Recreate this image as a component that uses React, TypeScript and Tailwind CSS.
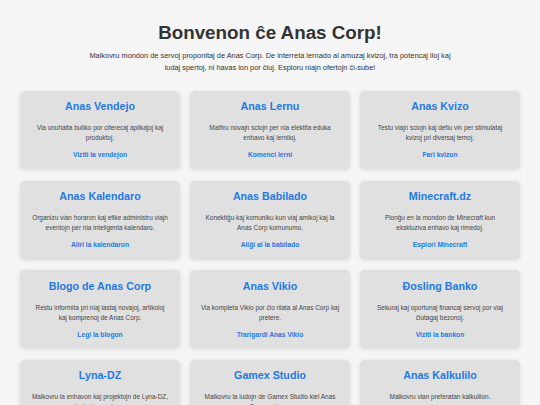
import React from "react";

type Card = { title: string; desc: string; link: string };

const cards: Card[] = [
  { title: "Anas Vendejo", desc: "Via unuhalta butiko por ciferecaj aplikaĵoj kaj produktoj.", link: "Viziti la vendejon" },
  { title: "Anas Lernu", desc: "Malfiru novajn sciojn per nia elektita eduka enhavo kaj lerniloj.", link: "Komenci lerni" },
  { title: "Anas Kvizo", desc: "Testu viajn sciojn kaj defiu vin per stimulataj kvizoj pri diversaj temoj.", link: "Fari kvizon" },
  { title: "Anas Kalendaro", desc: "Organizu vian horaron kaj efike administru viajn eventojn per nia inteligenta kalendaro.", link: "Aliri la kalendaron" },
  { title: "Anas Babilado", desc: "Konektiĝu kaj komuniku kun viaj amikoj kaj la Anas Corp komunumo.", link: "Aliĝi al la babilado" },
  { title: "Minecraft.dz", desc: "Plonĝu en la mondon de Minecraft kun ekskluziva enhavo kaj rimedoj.", link: "Esplori Minecraft" },
  { title: "Blogo de Anas Corp", desc: "Restu informita pri niaj lastaj novajoj, artikoloj kaj\u00A0komprenoj de Anas Corp.", link: "Legi la blogon" },
  { title: "Anas Vikio", desc: "Via kompleta Vikio por ĉio rilata al Anas Corp kaj pretere.", link: "Trarigardi Anas Vikio" },
  { title: "Đosling Banko", desc: "Sekuraj kaj oportunaj financaj servoj por viaj ĉiutagaj bezonoj.", link: "Viziti la bankon" },
  { title: "Lyna-DZ", desc: "Malkovru la enhavon kaj projektojn de Lyna-DZ, nia kreiva partnero.", link: "Viziti Lyna-DZ" },
  { title: "Gamex Studio", desc: "Malkovru la ludojn de Gamex Studio kiel Anas Corp partnero.", link: "Ludi nun" },
  { title: "Anas Kalkulilo", desc: "Malkovru vian preferatan kalkulilon.", link: "Uzi la kalkulilon" },
];

export default function App() {
  return (
    <div
      className="min-h-screen bg-[#f5f5f5] text-[#333]"
      style={{ fontFamily: '"Liberation Sans", Arial, sans-serif' }}
    >
      <header className="pt-[22px] text-center">
        <h1 className="text-[18.8px] leading-[22px] font-bold text-[#333]">Bonvenon ĉe Anas Corp!</h1>
        <p className="mx-auto mt-[6px] max-w-[372px] text-[7.4px] leading-[12.4px] text-[#333]">
          Malkovru mondon de servoj proponitaj de Anas Corp. De interreta lernado al amuzaj kvizoj, tra potencaj iloj kaj ludaj spertoj, ni havas ion por ĉiuj. Esploru niajn ofertojn ĉi-sube!
        </p>
      </header>
      <main className="mt-[16px] grid grid-cols-3 gap-x-[10px] gap-y-[11.7px] px-[20px] pb-[20px]">
        {cards.map((c) => (
          <div
            key={c.title}
            className="rounded-[5px] bg-[#e0e0e0] px-[10px] pt-[9.5px] pb-[9.5px] text-center shadow-[0_1px_4px_rgba(0,0,0,0.12)]"
          >
            <h2 className="text-[10.7px] leading-[13px] font-bold text-[#2479e3]">{c.title}</h2>
            <p className="mt-[10px] text-[6.45px] leading-[10px] text-[#444]">{c.desc}</p>
            <a href="#" className="mt-[7px] block text-[6.7px] leading-[9px] font-bold text-[#2479e3]">
              {c.link}
            </a>
          </div>
        ))}
      </main>
    </div>
  );
}
